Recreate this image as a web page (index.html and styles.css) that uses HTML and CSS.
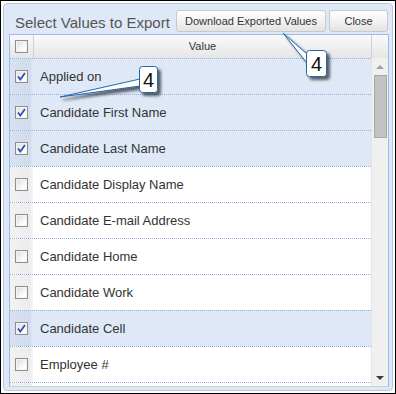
FILE: index.html
```html
<!DOCTYPE html>
<html>
<head>
<meta charset="utf-8">
<link rel="stylesheet" href="styles.css">
</head>
<body>
<div class="frame">
  <div class="panel">
    <div class="toolbar">
      <div class="title">Select Values to Export</div>
      <div class="buttons">
        <button class="btn btn-dl">Download Exported Values</button>
        <button class="btn btn-close">Close</button>
      </div>
    </div>
    <div class="grid">
      <div class="ghead">
        <div class="hcb"><span class="cb"></span></div>
        <div class="hval">Value</div>
        <div class="hscroll"></div>
      </div>
      <div class="gbody">
        <div class="rows">
          <div class="row sel"><div class="ccb"><span class="cb on"><svg viewBox="0 0 11 11"><path d="M2 5.5 L4.3 8.5 L9 2" /></svg></span></div><div class="cval">Applied on</div></div>
          <div class="row sel"><div class="ccb"><span class="cb on"><svg viewBox="0 0 11 11"><path d="M2 5.5 L4.3 8.5 L9 2" /></svg></span></div><div class="cval">Candidate First Name</div></div>
          <div class="row sel"><div class="ccb"><span class="cb on"><svg viewBox="0 0 11 11"><path d="M2 5.5 L4.3 8.5 L9 2" /></svg></span></div><div class="cval">Candidate Last Name</div></div>
          <div class="row"><div class="ccb"><span class="cb"></span></div><div class="cval">Candidate Display Name</div></div>
          <div class="row"><div class="ccb"><span class="cb"></span></div><div class="cval">Candidate E-mail Address</div></div>
          <div class="row"><div class="ccb"><span class="cb"></span></div><div class="cval">Candidate Home</div></div>
          <div class="row"><div class="ccb"><span class="cb"></span></div><div class="cval">Candidate Work</div></div>
          <div class="row sel"><div class="ccb"><span class="cb on"><svg viewBox="0 0 11 11"><path d="M2 5.5 L4.3 8.5 L9 2" /></svg></span></div><div class="cval">Candidate Cell</div></div>
          <div class="row"><div class="ccb"><span class="cb"></span></div><div class="cval">Employee #</div></div>
          <div class="row"><div class="ccb"></div><div class="cval"></div></div>
        </div>
        <div class="vscroll">
          <div class="arrow-up"></div>
          <div class="thumb"></div>
          <div class="track"></div>
          <div class="arrow-down"></div>
        </div>
      </div>
    </div>
  </div>
  <svg class="callouts" width="396" height="394" viewBox="0 0 396 394">
    <defs>
      <filter id="sh" x="-50%" y="-50%" width="200%" height="200%">
        <feGaussianBlur in="SourceAlpha" stdDeviation="1.8"/>
        <feOffset dx="3" dy="3" result="b"/>
        <feComponentTransfer><feFuncA type="linear" slope="0.6"/></feComponentTransfer>
        <feMerge><feMergeNode/><feMergeNode in="SourceGraphic"/></feMerge>
      </filter>
    </defs>
    <g filter="url(#sh)">
      <polygon points="140,79 60,97 140,86" fill="#ffffff" stroke="#2467ad" stroke-width="1"/>
      <rect x="139.5" y="66.5" width="18" height="26" rx="3" fill="#ffffff" stroke="#2467ad" stroke-width="1"/>
    </g>
    <rect x="140" y="78" width="2" height="9" fill="#ffffff"/>
    <text x="148.5" y="87" class="num">4</text>
    <g filter="url(#sh)">
      <polygon points="307,54 283,33 307,63" fill="#ffffff" stroke="#2467ad" stroke-width="1"/>
      <rect x="306.5" y="50.5" width="20" height="26" rx="3" fill="#ffffff" stroke="#2467ad" stroke-width="1"/>
    </g>
    <rect x="307" y="53" width="2" height="11" fill="#ffffff"/>
    <text x="316.5" y="71" class="num">4</text>
  </svg>
</div>
</body>
</html>
```

FILE: styles.css
```css
* { box-sizing: border-box; }
html, body { margin: 0; padding: 0; background: #ffffff; }
body { font-family: "Liberation Sans", Arial, sans-serif; }

.frame {
  position: relative;
  width: 396px;
  height: 394px;
  border: 1px solid #000000;
  padding: 2px;
  background: #ffffff;
}

.panel {
  height: 100%;
  border: 1px solid #b5c8e4;
  border-radius: 4px;
  background: #dfe8f6;
  padding: 6px 3px 0 5px;
  display: flex;
  flex-direction: column;
}

.toolbar {
  display: flex;
  align-items: center;
  justify-content: space-between;
  height: 22px;
}

.title {
  margin-left: 6px;
  font-size: 15px;
  color: #555555;
  margin-top: 2px;
}

.buttons {
  display: flex;
  gap: 3px;
  margin-right: 1px;
}

.btn {
  height: 22px;
  border: 1px solid #c9c9c9;
  border-radius: 3px;
  background: linear-gradient(#ffffff, #f4f4f4 45%, #e3e3e3);
  font-family: "Liberation Sans", Arial, sans-serif;
  font-size: 11px;
  color: #333333;
  padding: 0;
}
.btn-dl { width: 150px; }
.btn-close { width: 59px; }

.grid {
  margin-top: 2px;
  height: 353px;
  border-top: 1px solid #99bbe8;
  border-left: 1px solid #99bbe8;
  border-right: 1px solid #99bbe8;
  border-bottom: 1px solid #d0d0d0;
  background: #ffffff;
  display: flex;
  flex-direction: column;
}

.ghead {
  height: 23px;
  display: flex;
  background: linear-gradient(#fafafa, #eeeeee 60%, #e6e6e6);
  flex: none;
}
.hcb {
  width: 24px;
  border-right: 1px solid #d0d0d0;
  display: flex;
  align-items: center;
  justify-content: center;
  padding-right: 1px;
}
.hval {
  flex: 1;
  text-align: center;
  font-size: 11px;
  color: #333333;
  line-height: 23px;
}
.hscroll {
  width: 17px;
  border-left: 1px solid #d0d0d0;
}

.gbody {
  flex: 1;
  display: flex;
  overflow: hidden;
}
.rows {
  flex: 1;
  overflow: hidden;
}
.row {
  height: 36px;
  display: flex;
  border-top: 1px dotted #8fb0e0;
  background: #ffffff;
}
.row.sel { background: #dfe8f6; }

.ccb {
  width: 23px;
  display: flex;
  align-items: center;
  justify-content: center;
  background: linear-gradient(to right, #f2f2f2, #ececec 85%, #f6f6f6);
  padding-right: 1px;
}
.row.sel .ccb {
  background: linear-gradient(to right, #d8e2f1, #d0dbec 85%, #dfe8f6);
}
.cval {
  flex: 1;
  padding-left: 7px;
  display: flex;
  align-items: center;
  font-size: 13px;
  color: #333333;
}

.cb {
  width: 13px;
  height: 13px;
  border: 1px solid #8e8e8e;
  background: linear-gradient(135deg, #dcdcdc, #ffffff 75%);
  box-shadow: inset 0 0 0 1px #f4f4f4;
  display: flex;
  align-items: center;
  justify-content: center;
}
.cb svg { width: 11px; height: 11px; }
.cb svg path {
  fill: none;
  stroke: #2f4fb8;
  stroke-width: 1.8;
}

.vscroll {
  width: 17px;
  background: #f0f0f0;
  border-left: 1px solid #e4e4e4;
  display: flex;
  flex-direction: column;
  align-items: center;
}
.arrow-up {
  margin-top: 7px;
  width: 0;
  height: 0;
  border-left: 4px solid transparent;
  border-right: 4px solid transparent;
  border-bottom: 4px solid #a0a0a0;
}
.thumb {
  margin-top: 6px;
  width: 13px;
  height: 63px;
  background: #c2c2c2;
  border: 1px solid #a8a8a8;
}
.track { flex: 1; }
.arrow-down {
  margin-bottom: 6px;
  width: 0;
  height: 0;
  border-left: 4px solid transparent;
  border-right: 4px solid transparent;
  border-top: 4px solid #3c3c3c;
}

.callouts {
  position: absolute;
  left: -1px;
  top: -1px;
  pointer-events: none;
}
.num {
  font-family: "Liberation Sans Narrow", "Liberation Sans", Arial, sans-serif;
  font-size: 20px;
  fill: #111111;
  text-anchor: middle;
}
```
